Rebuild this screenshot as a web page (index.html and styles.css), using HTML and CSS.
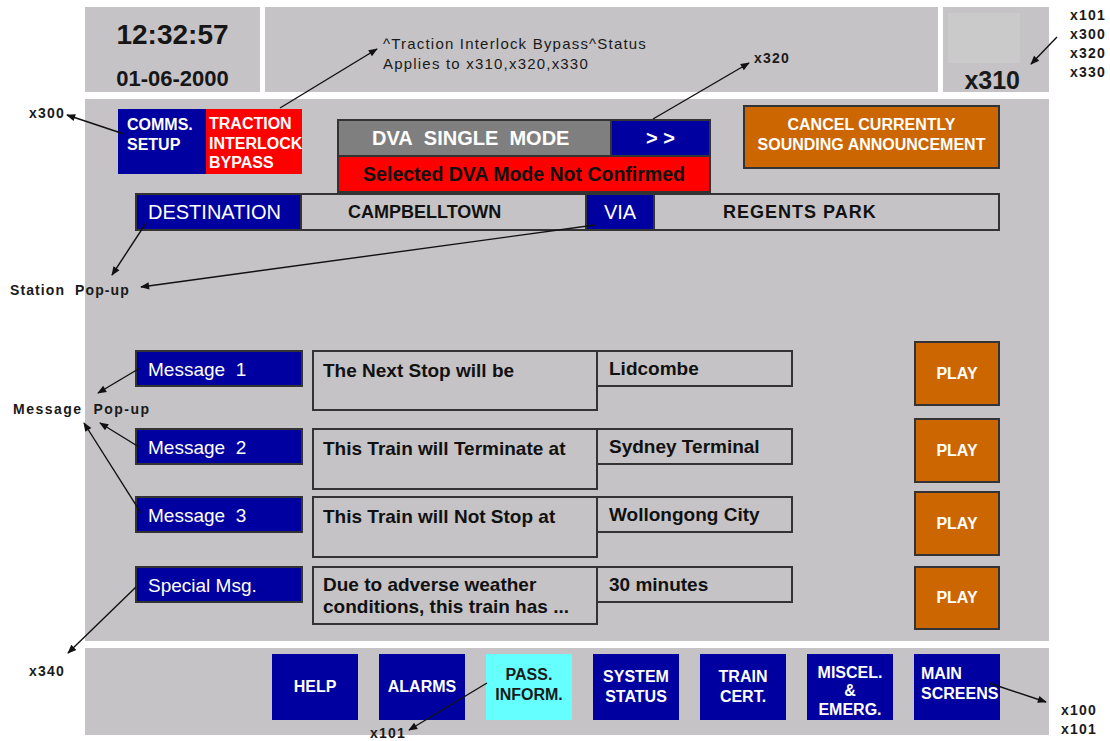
FILE: index.html
```html
<!DOCTYPE html>
<html lang="en">
  <head>
    <meta charset="UTF-8" />
    <meta name="viewport" content="width=device-width, initial-scale=1.0" />
    <title>DVA Passenger Information Screen</title>
    <link rel="stylesheet" href="styles.css">
  </head>
  <body>
    <div class="sheet">
      <div class="screen">
        <!-- Header: clock, status line, unit id -->
        <div class="top-row">
          <div class="panel clock">
            <div class="time">12:32:57</div>
            <div class="date">01-06-2000</div>
          </div>
          <div class="panel status-bar">
            <p class="status-note">^Traction Interlock Bypass^Status<br>Applies to x310,x320,x330</p>
          </div>
          <div class="panel unit">
            <div class="unit-box"></div>
            <div class="unit-id">x310</div>
          </div>
        </div>

        <!-- Main working area -->
        <div class="panel main">
          <div class="control-row">
            <div class="mode-group">
              <div class="btn comms">COMMS.<br>SETUP</div>
              <div class="btn traction">TRACTION<br>INTERLOCK<br>BYPASS</div>
            </div>
            <div class="dva">
              <div class="dva-top">
                <div class="dva-mode">DVA&nbsp; SINGLE&nbsp; MODE</div>
                <div class="dva-next">&gt; &gt;</div>
              </div>
              <div class="dva-warning">Selected DVA Mode Not Confirmed</div>
            </div>
            <div class="btn cancel">CANCEL CURRENTLY<br>SOUNDING ANNOUNCEMENT</div>
          </div>

          <div class="route-row">
            <div class="route-label dest-label">DESTINATION</div>
            <div class="route-value dest-value">CAMPBELLTOWN</div>
            <div class="route-label via-label">VIA</div>
            <div class="route-value via-value">REGENTS PARK</div>
          </div>

          <div class="messages">
            <div class="msg-row row-1">
              <div class="msg-fields">
                <div class="msg-label">Message&nbsp; 1</div>
                <div class="msg-text">The Next Stop will be</div>
                <div class="msg-value">Lidcombe</div>
              </div>
              <div class="play">PLAY</div>
            </div>
            <div class="msg-row row-2">
              <div class="msg-fields">
                <div class="msg-label">Message&nbsp; 2</div>
                <div class="msg-text">This Train will Terminate at</div>
                <div class="msg-value">Sydney Terminal</div>
              </div>
              <div class="play">PLAY</div>
            </div>
            <div class="msg-row row-3">
              <div class="msg-fields">
                <div class="msg-label">Message&nbsp; 3</div>
                <div class="msg-text">This Train will Not Stop at</div>
                <div class="msg-value">Wollongong City</div>
              </div>
              <div class="play">PLAY</div>
            </div>
            <div class="msg-row row-4">
              <div class="msg-fields">
                <div class="msg-label">Special Msg.</div>
                <div class="msg-text">Due to adverse weather<br>conditions, this train has ...</div>
                <div class="msg-value">30 minutes</div>
              </div>
              <div class="play">PLAY</div>
            </div>
          </div>
        </div>

        <!-- Bottom navigation -->
        <div class="panel nav">
          <div class="nav-btn">HELP</div>
          <div class="nav-btn">ALARMS</div>
          <div class="nav-btn pass">PASS.<br>INFORM.</div>
          <div class="nav-btn">SYSTEM<br>STATUS</div>
          <div class="nav-btn">TRAIN<br>CERT.</div>
          <div class="nav-btn misc">MISCEL.<br>&amp;<br>EMERG.</div>
          <div class="nav-btn main-screens">MAIN<br>SCREENS</div>
        </div>
      </div>

      <!-- Annotation labels and leader arrows -->
      <div class="note n-x300">x300</div>
      <div class="note n-x320">x320</div>
      <div class="note n-units">x101<br>x300<br>x320<br>x330</div>
      <div class="note n-station">Station&nbsp; Pop-up</div>
      <div class="note n-message">Message&nbsp; Pop-up</div>
      <div class="note n-x340">x340</div>
      <div class="note n-x101">x101</div>
      <div class="note n-x100">x100<br>x101</div>

      <svg class="arrows" width="1110" height="741" viewBox="0 0 1110 741">
        <defs>
          <marker id="head" viewBox="0 0 10 10" refX="9" refY="5" markerWidth="10" markerHeight="9" markerUnits="userSpaceOnUse" orient="auto">
            <path d="M0 1 L10 5 L0 9 z" fill="#111" />
          </marker>
        </defs>
        <g stroke="#111" stroke-width="1.4" fill="none" marker-end="url(#head)">
          <line x1="124" y1="134" x2="67" y2="115" />
          <line x1="280" y1="108" x2="377" y2="49" />
          <line x1="653" y1="119" x2="749" y2="63" />
          <line x1="1057" y1="37" x2="1031" y2="64" />
          <line x1="146" y1="223" x2="112" y2="275" />
          <line x1="595" y1="225" x2="141" y2="287" />
          <line x1="140" y1="368" x2="98" y2="393" />
          <line x1="139" y1="447" x2="100" y2="423" />
          <line x1="141" y1="513" x2="84" y2="423" />
          <line x1="136" y1="587" x2="68" y2="653" />
          <line x1="487" y1="683" x2="409" y2="730" />
          <line x1="989" y1="683" x2="1046" y2="702" />
        </g>
      </svg>
    </div>
  </body>
</html>
```

FILE: styles.css
```css
body {
  margin: 0;
  background-color: #fff;
  font-family: "Liberation Sans", Arial, sans-serif;
  color: #111;
}

.sheet {
  position: relative;
  width: 1110px;
  height: 741px;
  overflow: hidden;
}

.screen {
  width: 964px;
  margin-left: 85px;
  padding-top: 7px;
}

.panel {
  background-color: #c5c3c6;
  box-sizing: border-box;
}

/* Header */
.top-row {
  display: flex;
  gap: 5px;
  height: 85px;
}

.clock {
  width: 175px;
  padding-top: 12px;
  text-align: center;
  font-weight: bold;
  color: #161616;
}

.time {
  font-size: 28px;
  line-height: 32px;
}

.date {
  margin-top: 15px;
  font-size: 22px;
  line-height: 26px;
}

.status-bar {
  width: 673px;
  padding: 27px 0 0 118px;
}

.status-note {
  margin: 0;
  font-size: 15px;
  line-height: 20px;
  letter-spacing: 1.2px;
  color: #1a1a1a;
}

.unit {
  width: 106px;
  padding: 6px 0 0 5px;
}

.unit-box {
  width: 72px;
  height: 50px;
  background-color: #cbcaca;
}

.unit-id {
  width: 72px;
  margin-top: 3px;
  text-align: right;
  font-size: 25px;
  font-weight: bold;
  line-height: 28px;
  color: #1a1a1a;
}

/* Main area */
.main {
  margin-top: 7px;
  height: 542px;
}

.control-row {
  display: flex;
  align-items: flex-start;
  height: 94px;
  padding-left: 33px;
}

.btn {
  box-sizing: border-box;
  color: #fff;
  font-weight: bold;
}

.mode-group {
  display: flex;
  margin-top: 10px;
}

.comms {
  width: 88px;
  height: 65px;
  padding: 6px 0 0 9px;
  background-color: #0000a0;
  font-size: 16px;
  line-height: 20px;
}

.traction {
  width: 96px;
  height: 65px;
  padding: 5px 0 0 3px;
  background-color: #ff0000;
  font-size: 16px;
  line-height: 19.5px;
}

.dva {
  width: 374px;
  margin: 20px 0 0 35px;
  border: 2px solid #333;
  box-sizing: border-box;
}

.dva-top {
  display: flex;
  height: 34px;
}

.dva-mode {
  display: flex;
  align-items: center;
  width: 273px;
  padding-left: 33px;
  box-sizing: border-box;
  background-color: #7f7f7f;
  border-right: 2px solid #333;
  color: #fff;
  font-size: 20px;
  font-weight: bold;
}

.dva-next {
  display: flex;
  flex: 1;
  align-items: center;
  justify-content: center;
  background-color: #0000a0;
  color: #fff;
  font-size: 20px;
  font-weight: bold;
}

.dva-warning {
  display: flex;
  align-items: center;
  justify-content: center;
  height: 34px;
  background-color: #ff0000;
  border-top: 2px solid #333;
  font-size: 19.5px;
  font-weight: bold;
}

.cancel {
  display: flex;
  align-items: center;
  justify-content: center;
  width: 257px;
  height: 64px;
  margin: 6px 0 0 32px;
  padding-bottom: 4px;
  background-color: #cc6600;
  border: 2px solid #333;
  text-align: center;
  font-size: 16px;
  line-height: 20px;
}

.route-row {
  display: flex;
  width: 865px;
  height: 38px;
  margin-left: 50px;
  border: 2px solid #333;
  box-sizing: border-box;
}

.route-label,
.route-value {
  display: flex;
  align-items: center;
  box-sizing: border-box;
  border-right: 2px solid #333;
}

.route-label {
  background-color: #0000a0;
  color: #fff;
  font-size: 20px;
}

.route-value {
  font-size: 18px;
  font-weight: bold;
}

.dest-label {
  width: 165px;
  padding-left: 11px;
}

.dest-value {
  width: 285px;
  padding-left: 46px;
}

.via-label {
  width: 68px;
  justify-content: center;
}

.via-value {
  flex: 1;
  padding-left: 68px;
  border-right: none;
  letter-spacing: 1px;
}

/* Message rows */
.messages {
  display: flex;
  flex-direction: column;
  margin-top: 110px;
}

.msg-row {
  display: flex;
  align-items: flex-start;
  padding-left: 50px;
}

.msg-fields {
  display: flex;
  align-items: flex-start;
}

.msg-label {
  display: flex;
  align-items: center;
  width: 168px;
  height: 37px;
  padding: 2px 0 0 11px;
  box-sizing: border-box;
  background-color: #0000a0;
  border: 2px solid #333;
  color: #fff;
  font-size: 19px;
}

.msg-text {
  width: 286px;
  height: 61px;
  margin-left: 9px;
  padding: 8px 0 0 9px;
  box-sizing: border-box;
  border: 2px solid #333;
  font-size: 19px;
  font-weight: bold;
  line-height: 22px;
}

.msg-value {
  display: flex;
  align-items: center;
  width: 197px;
  height: 37px;
  margin-left: -2px;
  padding-left: 11px;
  box-sizing: border-box;
  border: 2px solid #333;
  font-size: 19px;
  font-weight: bold;
}

.play {
  display: flex;
  align-items: center;
  justify-content: center;
  width: 86px;
  height: 65px;
  margin-left: 121px;
  box-sizing: border-box;
  background-color: #cc6600;
  border: 2px solid #333;
  color: #fff;
  font-size: 16px;
  font-weight: bold;
}

.row-1 .msg-fields {
  margin-top: 9px;
}

.row-2 {
  margin-top: 7px;
}

.row-2 .msg-fields {
  margin-top: 10px;
}

.row-2 .msg-text {
  height: 62px;
}

.row-3 {
  margin-top: 1px;
}

.row-3 .msg-fields {
  margin-top: 5px;
}

.row-3 .msg-text {
  height: 62px;
}

.row-4 {
  margin-top: 8px;
}

.row-4 .msg-text {
  height: 59px;
  padding-top: 6px;
}

.row-4 .play {
  height: 64px;
}

/* Bottom navigation */
.nav {
  display: flex;
  gap: 21px;
  height: 87px;
  margin-top: 7px;
  padding: 6px 0 0 187px;
}

.nav-btn {
  display: flex;
  align-items: center;
  justify-content: center;
  width: 86px;
  height: 66px;
  box-sizing: border-box;
  background-color: #0000a0;
  color: #fff;
  text-align: center;
  font-size: 16px;
  font-weight: bold;
  line-height: 20px;
}

.nav-btn.pass {
  background-color: #66ffff;
  color: #1a1a1a;
  padding-bottom: 4px;
}

.nav-btn.misc {
  padding-top: 9px;
  line-height: 18.5px;
}

.nav-btn.main-screens {
  justify-content: flex-start;
  padding: 0 0 6px 7px;
  text-align: left;
}

/* Annotations */
.note {
  position: absolute;
  font-size: 14px;
  font-weight: bold;
  line-height: 18px;
  letter-spacing: 1.2px;
  color: #1a1a1a;
}

.n-x300 { left: 29px; top: 104px; }
.n-x320 { left: 754px; top: 49px; }
.n-units { left: 1070px; top: 6px; line-height: 19px; }
.n-station { left: 10px; top: 281px; letter-spacing: 1.1px; }
.n-message { left: 13px; top: 400px; letter-spacing: 1.5px; }
.n-x340 { left: 29px; top: 662px; }
.n-x101 { left: 370px; top: 724px; }
.n-x100 { left: 1061px; top: 701px; line-height: 19px; }

.arrows {
  position: absolute;
  left: 0;
  top: 0;
  pointer-events: none;
}
```
